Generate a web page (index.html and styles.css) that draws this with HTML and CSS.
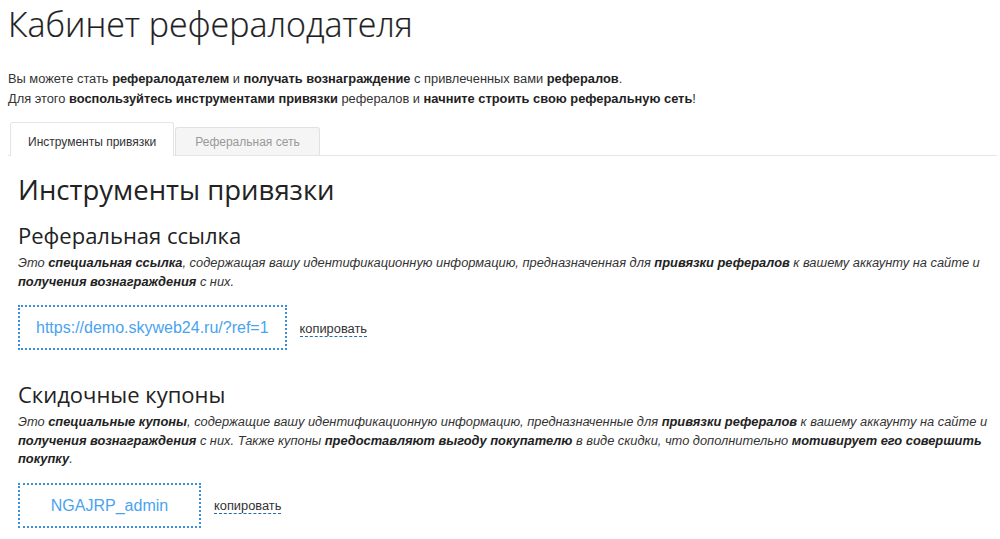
FILE: index.html
```html
<!DOCTYPE html>
<html lang="ru">
<head>
    <meta charset="UTF-8">
    <meta name="viewport" content="width=device-width, initial-scale=1.0">
    <title>Кабинет рефералодателя</title>
    <link rel="stylesheet" href="styles.css">
</head>
<body>
    <div class="cabinet">
        <h1 class="cabinet-title">Кабинет рефералодателя</h1>
        <p class="intro">
            Вы можете стать <b>рефералодателем</b> и <b>получать вознаграждение</b> с привлеченных вами <b>рефералов</b>.<br>
            Для этого <b>воспользуйтесь инструментами привязки</b> рефералов и <b>начните строить свою реферальную сеть</b>!
        </p>

        <!-- Вкладки -->
        <ul class="tabs">
            <li class="tab tab-active">Инструменты привязки</li>
            <li class="tab">Реферальная сеть</li>
        </ul>

        <div class="tab-pane">
            <h2 class="pane-title">Инструменты привязки</h2>

            <div class="tool">
                <h3 class="tool-title">Реферальная ссылка</h3>
                <p class="tool-text">
                    Это <b>специальная ссылка</b>, содержащая вашу идентификационную информацию, предназначенная для <b>привязки рефералов</b> к вашему аккаунту на сайте и <b>получения вознаграждения</b> с них.
                </p>
                <div class="copy-row">
                    <div class="copy-box">https://demo.skyweb24.ru/?ref=1</div>
                    <span class="copy-link">копировать</span>
                </div>
            </div>

            <div class="tool tool-next">
                <h3 class="tool-title">Скидочные купоны</h3>
                <p class="tool-text">
                    Это <b>специальные купоны</b>, содержащие вашу идентификационную информацию, предназначенные для <b>привязки рефералов</b> к вашему аккаунту на сайте и <b>получения вознаграждения</b> с них. Также купоны <b>предоставляют выгоду покупателю</b> в виде скидки, что дополнительно <b>мотивирует его совершить покупку</b>.
                </p>
                <div class="copy-row">
                    <div class="copy-box copy-box-coupon">NGAJRP_admin</div>
                    <span class="copy-link">копировать</span>
                </div>
            </div>
        </div>
    </div>
</body>
</html>
```

FILE: styles.css
```css
body {
    margin: 0;
    padding: 0 3px 0 8px;
    background: #fff;
    color: #333;
    font-family: "Liberation Sans", Arial, sans-serif;
    font-size: 12.85px;
}
b {
    color: #222;
}
.cabinet-title {
    margin: 0;
    font-family: "Open Sans", sans-serif;
    font-weight: 300;
    font-size: 34px;
    line-height: 48px;
    color: #1e1e1e;
    -webkit-text-stroke: 0.2px #1e1e1e;
}
.intro {
    margin: 21px 0 0;
    line-height: 20px;
}
.tabs {
    display: flex;
    align-items: flex-end;
    list-style: none;
    margin: 13px 0 0;
    padding: 0 0 0 2px;
    border-bottom: 1px solid #e3e6e6;
    font-size: 12px;
}
.tab {
    padding: 7px 19px 6px;
    line-height: 14px;
    color: #999;
    background: #f5f5f5;
    border: 1px solid #dfe2e2;
    border-bottom: none;
    border-radius: 3px 3px 0 0;
    margin-right: 1px;
}
.tab-active {
    padding: 12px 17px 7px;
    color: #333;
    background: #fff;
    border-color: #e3e6e6;
    margin-bottom: -1px;
}
.tab-pane {
    padding-left: 10px;
}
.pane-title {
    margin: 16px 0 0;
    font-family: "Open Sans", sans-serif;
    font-weight: 400;
    font-size: 27.5px;
    line-height: 36px;
    color: #222;
}
.tool-title {
    margin: 13px 0 5px;
    font-family: "Open Sans", sans-serif;
    font-weight: 400;
    font-size: 22px;
    line-height: 28px;
    color: #222;
}
.tool-next .tool-title {
    margin-top: 30px;
}
.tool-text {
    margin: 0;
    font-style: italic;
    line-height: 18.5px;
}
.copy-row {
    display: flex;
    align-items: center;
    gap: 13px;
    margin-top: 14px;
}
.copy-box {
    padding: 10px 16px;
    border: 2px dotted #3b8fd9;
    font-size: 16px;
    line-height: 21px;
    color: #4aa3ef;
}
.copy-box-coupon {
    min-width: 123px;
    padding: 10px 28px;
    text-align: center;
}
.copy-link {
    padding-top: 2px;
    line-height: 15px;
    color: #333;
    border-bottom: 1px dashed #2b6aa6;
    cursor: pointer;
}
```
